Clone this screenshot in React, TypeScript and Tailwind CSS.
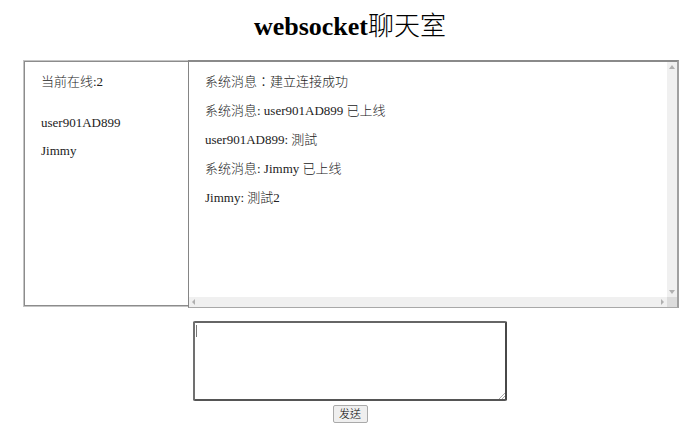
import { useState } from "react";

const users = ["user901AD899", "Jimmy"];
const messages = [
  "系统消息：建立连接成功",
  "系统消息: user901AD899 已上线",
  "user901AD899: 測試",
  "系统消息: Jimmy 已上线",
  "Jimmy: 測試2",
];

function Arrow({ points }: { points: string }) {
  return (
    <svg viewBox="0 0 6 6" className="size-[6px] fill-[#b0b0b0]" aria-hidden="true">
      <polygon points={points} />
    </svg>
  );
}

function MessageLog() {
  return (
    <section
      aria-label="消息"
      className="grid min-w-0 flex-1 grid-cols-[1fr_10px] grid-rows-[1fr_10px] border-t-2 border-r-2 border-b border-l border-t-[#8a8a8a] border-r-[#a0a0a0] border-b-[#a8a8a8] border-l-[#858585]"
    >
      <div className="flex flex-col gap-[13px] px-4 pt-3">
        {messages.map((m) => (
          <p key={m}>{m}</p>
        ))}
      </div>
      <div className="flex flex-col items-center justify-between bg-[#f0f0f0] py-[2px]">
        <Arrow points="3,1 6,5 0,5" />
        <Arrow points="0,1 6,1 3,5" />
      </div>
      <div className="flex items-center justify-between bg-[#f0f0f0] px-[2px]">
        <Arrow points="1,3 4,0 4,6" />
        <Arrow points="2,0 5,3 2,6" />
      </div>
      <div className="bg-[#dcdcdc]" />
    </section>
  );
}

export default function App() {
  const [text, setText] = useState("");
  return (
    <main className="bg-white font-['Liberation_Serif','Noto_Sans_CJK_TC',serif] text-[13px] leading-4 font-light text-[#222]">
      <h1 className="pt-[9px] text-center text-[26px] leading-9 font-bold text-black">
        websocket<span className="font-light">聊天室</span>
      </h1>
      <div className="mt-[15px] mr-[21px] ml-[23px] flex h-[248px]">
        <aside className="mb-px w-[165px] shrink-0 border border-r-0 border-[#c4c4c4]">
          <div className="h-full border border-r-0 border-[#8c8c8c] px-4 pt-3">
            <p>当前在线:2</p>
            <ul className="mt-[25px] flex flex-col gap-3">
              {users.map((u) => (
                <li key={u}>{u}</li>
              ))}
            </ul>
          </div>
        </aside>
        <MessageLog />
      </div>
      <form className="mt-[13px] flex flex-col items-center" onSubmit={(e) => e.preventDefault()}>
        <div className="relative h-20 w-[314px]">
          <textarea
            aria-label="消息内容"
            value={text}
            onChange={(e) => setText(e.target.value)}
            className="block size-full resize-none rounded-[2px] border-2 border-t-[#666] border-r-[#484848] border-b-[#555] border-l-[#707070] p-[2px] outline-none"
          />
          <span className="absolute top-1 left-[3px] h-3 w-px bg-[#777]" />
          <svg viewBox="0 0 6 6" className="absolute right-[2px] bottom-[2px] size-[6px]" stroke="#aaa" aria-hidden="true">
            <path d="M0 6L6 0M3 6L6 3" />
          </svg>
        </div>
        <button type="submit" className="mt-1 h-[18px] w-[35px] rounded-[2px] border border-[#aaa] bg-[#efefef] text-[11px] leading-4 text-black">
          发送
        </button>
      </form>
    </main>
  );
}
